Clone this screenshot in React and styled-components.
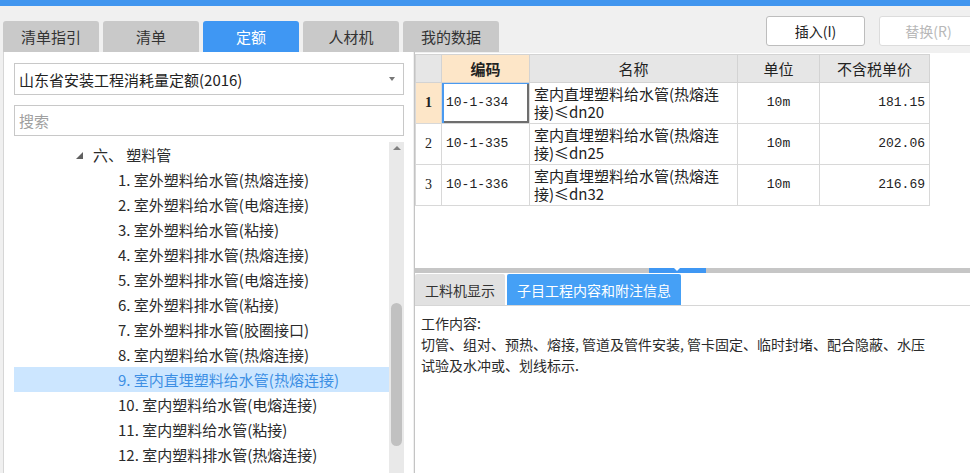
import React from "react";
import styled, { createGlobalStyle } from "styled-components";

const GlobalStyle = createGlobalStyle`
  html, body {
    margin: 0;
    padding: 0;
    background: #f0f0f0;
  }
  body {
    font-family: "Noto Sans CJK SC", "Noto Sans", sans-serif;
    color: #333333;
  }
`;

const Page = styled.div`
  width: 970px;
  height: 473px;
  overflow: hidden;
  display: flex;
  flex-direction: column;
  background: #f0f0f0;
`;

const TopStrip = styled.div`
  height: 6px;
  background: #4196ef;
  flex-shrink: 0;
`;

const Header = styled.div`
  height: 46px;
  display: flex;
  align-items: flex-end;
  padding-left: 3px;
  flex-shrink: 0;
`;

const TabRow = styled.div`
  display: flex;
  gap: 4px;
`;

const Tab = styled.div`
  width: 96px;
  height: 31px;
  display: flex;
  align-items: center;
  justify-content: center;
  border-radius: 3px 3px 0 0;
  font-size: 15px;
  background: ${(p) => (p.$active ? "#3f97f3" : "#c9c9c9")};
  color: ${(p) => (p.$active ? "#ffffff" : "#333333")};
`;

const ButtonBar = styled.div`
  display: flex;
  gap: 14px;
  margin-left: auto;
  margin-right: -8px;
  align-self: flex-start;
  margin-top: 10px;
`;

const ToolButton = styled.div`
  width: 97px;
  height: 28px;
  border: 1px solid ${(p) => (p.$disabled ? "#dcdcdc" : "#bdbdbd")};
  border-radius: 3px;
  background: #ffffff;
  display: flex;
  align-items: center;
  justify-content: center;
  font-size: 14px;
  color: ${(p) => (p.$disabled ? "#b8b8b8" : "#222222")};
`;

const Body = styled.div`
  flex: 1;
  display: flex;
  min-height: 0;
`;

const LeftPanel = styled.div`
  width: 410px;
  margin-left: 3px;
  border-left: 1px solid #d6d6d6;
  background: #ffffff;
  display: flex;
  flex-direction: column;
  padding: 11px 9px 0 10px;
  box-sizing: border-box;
`;

const Select = styled.div`
  height: 32px;
  border: 1px solid #c8c8c8;
  box-sizing: border-box;
  display: flex;
  align-items: center;
  justify-content: space-between;
  padding: 0 8px 0 4px;
  font-size: 15px;
  color: #222222;
`;

const Caret = styled.span`
  width: 0;
  height: 0;
  border-left: 3px solid transparent;
  border-right: 3px solid transparent;
  border-top: 4px solid #777777;
`;

const Search = styled.div`
  height: 31px;
  margin-top: 10px;
  border: 1px solid #c8c8c8;
  box-sizing: border-box;
  display: flex;
  align-items: center;
  padding-left: 4px;
  font-size: 15px;
  color: #a0a0a0;
`;

const TreeArea = styled.div`
  flex: 1;
  margin-top: 6px;
  display: flex;
  min-height: 0;
`;

const TreeList = styled.div`
  flex: 1;
  overflow: hidden;
`;

const TreeRow = styled.div`
  height: 25px;
  display: flex;
  align-items: center;
  padding-left: ${(p) => p.$indent}px;
  font-size: 15px;
  white-space: nowrap;
  background: ${(p) => (p.$selected ? "#cce6ff" : "transparent")};
  color: ${(p) => (p.$selected ? "#3d8fe4" : "#2b2b2b")};
`;

const Expander = styled.span`
  width: 0;
  height: 0;
  border-left: 7px solid transparent;
  border-bottom: 7px solid #606060;
  margin-right: 10px;
  margin-top: 2px;
`;

const ScrollTrack = styled.div`
  width: 15px;
  background: #e9e9e9;
  display: flex;
  flex-direction: column;
  align-items: center;
`;

const ScrollArrow = styled.span`
  margin-top: 4px;
  width: 0;
  height: 0;
  border-left: 4px solid transparent;
  border-right: 4px solid transparent;
  border-bottom: 4px solid #808080;
`;

const ScrollThumb = styled.div`
  width: 11px;
  height: 143px;
  margin-top: 153px;
  border-radius: 6px;
  background: #c1c1c1;
`;

const RightPanel = styled.div`
  flex: 1;
  margin-left: 1px;
  border-left: 1px solid #c4c4c4;
  display: flex;
  flex-direction: column;
  min-width: 0;
`;

const TableArea = styled.div`
  height: 216px;
  background: #ffffff;
  padding-top: 1px;
  box-sizing: border-box;
  border-top: 1px solid #f0f0f0;
`;

const Grid = styled.table`
  border-collapse: collapse;
  table-layout: fixed;
  width: 514px;
  font-size: 15px;
  color: #222222;
`;

const HeadCell = styled.th`
  height: 27px;
  padding: 0;
  border: 1px solid #d3d3d3;
  font-weight: ${(p) => (p.$hl ? 700 : 400)};
  background: ${(p) => (p.$hl ? "#fde6c8" : "#e6e6e6")};
  text-align: center;
  font-size: 15px;
`;

const Cell = styled.td`
  height: 40px;
  padding: 0 4px;
  border: 1px solid #d8d8d8;
  text-align: ${(p) => p.$align || "left"};
  line-height: 18px;
  vertical-align: middle;
  font-family: ${(p) => (p.$mono ? '"Liberation Mono", "Noto Sans CJK SC", monospace' : '"Noto Sans CJK SC", sans-serif')};
  font-size: ${(p) => (p.$mono ? "13px" : "15px")};
`;

const RowNum = styled(Cell)`
  text-align: center;
  padding: 0;
  font-family: "Liberation Serif", serif;
  font-size: 14px;
  background: ${(p) => (p.$active ? "#fde6c8" : "#ffffff")};
  font-weight: ${(p) => (p.$active ? 700 : 400)};
`;

const FocusCell = styled(Cell)`
  box-shadow: inset 2px 1px #4a9af0, inset -2px -2px #6e6e6e;
`;

const Splitter = styled.div`
  height: 5px;
  background: #c6c6c6;
  display: flex;
  justify-content: center;
  flex-shrink: 0;
`;

const SplitHandle = styled.div`
  width: 57px;
  margin-left: -31px;
  background: #3f97f3;
  display: flex;
  justify-content: center;
  align-items: flex-start;
  &::after {
    content: "";
    border-left: 3px solid transparent;
    border-right: 3px solid transparent;
    border-top: 3px solid #ffffff;
  }
`;

const BottomTabs = styled.div`
  height: 32px;
  display: flex;
  gap: 2px;
  align-items: flex-end;
  background: #ffffff;
  border-bottom: 1px solid #d6d6d6;
  flex-shrink: 0;
`;

const BottomTab = styled.div`
  height: 31px;
  padding: 0 10px;
  display: flex;
  align-items: center;
  font-size: 14px;
  border-radius: 2px 2px 0 0;
  background: ${(p) => (p.$active ? "#45a0f6" : "#e1e1e1")};
  color: ${(p) => (p.$active ? "#ffffff" : "#333333")};
`;

const Notes = styled.div`
  flex: 1;
  background: #ffffff;
  padding: 7px 6px 0 6px;
  font-size: 14px;
  line-height: 21px;
  color: #2b2b2b;
  white-space: nowrap;
`;

const treeItems = [
  "1. 室外塑料给水管(热熔连接)",
  "2. 室外塑料给水管(电熔连接)",
  "3. 室外塑料给水管(粘接)",
  "4. 室外塑料排水管(热熔连接)",
  "5. 室外塑料排水管(电熔连接)",
  "6. 室外塑料排水管(粘接)",
  "7. 室外塑料排水管(胶圈接口)",
  "8. 室内塑料给水管(热熔连接)",
  "9. 室内直埋塑料给水管(热熔连接)",
  "10. 室内塑料给水管(电熔连接)",
  "11. 室内塑料给水管(粘接)",
  "12. 室内塑料排水管(热熔连接)",
  "13. 室内塑料排水管(粘接)",
];

const rows = [
  { no: 1, code: "10-1-334", dn: "20", unit: "10m", price: "181.15" },
  { no: 2, code: "10-1-335", dn: "25", unit: "10m", price: "202.06" },
  { no: 3, code: "10-1-336", dn: "32", unit: "10m", price: "216.69" },
];

const topTabs = ["清单指引", "清单", "定额", "人材机", "我的数据"];

function App() {
  return (
    <>
      <GlobalStyle />
      <Page>
        <TopStrip />
        <Header>
          <TabRow>
            {topTabs.map((t) => (
              <Tab key={t} $active={t === "定额"}>
                {t}
              </Tab>
            ))}
          </TabRow>
          <ButtonBar>
            <ToolButton>插入(I)</ToolButton>
            <ToolButton $disabled>替换(R)</ToolButton>
          </ButtonBar>
        </Header>

        <Body>
          <LeftPanel>
            <Select>
              <span>山东省安装工程消耗量定额(2016)</span>
              <Caret />
            </Select>
            <Search>搜索</Search>
            <TreeArea>
              <TreeList>
                <TreeRow $indent={62}>
                  <Expander />
                  六、 塑料管
                </TreeRow>
                {treeItems.map((t, i) => (
                  <TreeRow key={t} $indent={104} $selected={i === 8}>
                    {t}
                  </TreeRow>
                ))}
              </TreeList>
              <ScrollTrack>
                <ScrollArrow />
                <ScrollThumb />
              </ScrollTrack>
            </TreeArea>
          </LeftPanel>

          <RightPanel>
            <TableArea>
              <Grid>
                <colgroup>
                  <col style={{ width: 26 }} />
                  <col style={{ width: 88 }} />
                  <col style={{ width: 208 }} />
                  <col style={{ width: 82 }} />
                  <col style={{ width: 110 }} />
                </colgroup>
                <thead>
                  <tr>
                    <HeadCell />
                    <HeadCell $hl>编码</HeadCell>
                    <HeadCell>名称</HeadCell>
                    <HeadCell>单位</HeadCell>
                    <HeadCell>不含税单价</HeadCell>
                  </tr>
                </thead>
                <tbody>
                  {rows.map((r) => {
                    const CodeCell = r.no === 1 ? FocusCell : Cell;
                    return (
                      <tr key={r.no}>
                        <RowNum $active={r.no === 1}>{r.no}</RowNum>
                        <CodeCell $mono>{r.code}</CodeCell>
                        <Cell>
                          室内直埋塑料给水管(热熔连
                          <br />
                          接)≤dn{r.dn}
                        </Cell>
                        <Cell $mono $align="center">{r.unit}</Cell>
                        <Cell $mono $align="right">{r.price}</Cell>
                      </tr>
                    );
                  })}
                </tbody>
              </Grid>
            </TableArea>
            <Splitter>
              <SplitHandle />
            </Splitter>
            <BottomTabs>
              <BottomTab>工料机显示</BottomTab>
              <BottomTab $active>子目工程内容和附注信息</BottomTab>
            </BottomTabs>
            <Notes>
              工作内容:
              <br />
              切管、组对、预热、熔接, 管道及管件安装, 管卡固定、临时封堵、配合隐蔽、水压
              <br />
              试验及水冲或、划线标示.
            </Notes>
          </RightPanel>
        </Body>
      </Page>
    </>
  );
}

export default App;
